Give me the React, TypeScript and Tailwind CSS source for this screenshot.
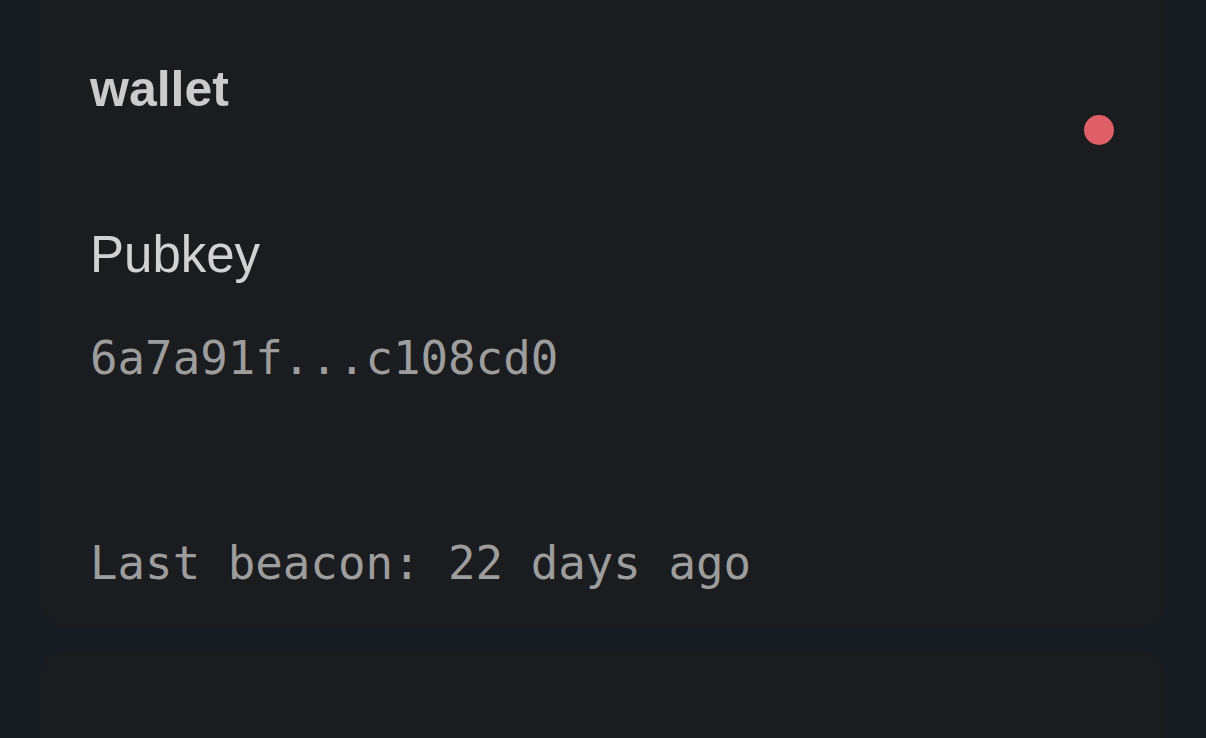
type Device = {
  name: string;
  pubkey: string;
  lastBeacon: string;
  online: boolean;
};

const devices: Device[] = [
  { name: "wallet", pubkey: "6a7a91f...c108cd0", lastBeacon: "22 days ago", online: false },
];

function DeviceCard({ device }: { device: Device }) {
  return (
    <div className="rounded-[24px] bg-[#1b1c1f] px-[50px] pt-[104px] pb-[40px]">
      <div className="flex items-start justify-between">
        <h2 className="text-[50px] leading-none font-bold text-[#cbcbcb] font-['Liberation_Sans',Arial,sans-serif]">
          {device.name}
        </h2>
        <span
          className={`mt-[51px] h-[30px] w-[30px] rounded-full ${
            device.online ? "bg-[#4caf50]" : "bg-[#df5f66]"
          }`}
        />
      </div>
      <div className="mt-[84px] text-[51px] leading-none text-[#d2d2d2] font-['Liberation_Sans',Arial,sans-serif]">
        Pubkey
      </div>
      <div className="mt-[56px] text-[45.75px] leading-none text-[#9d9d9d] font-['DejaVu_Sans_Mono',monospace]">
        {device.pubkey}
      </div>
      <div className="mt-[159px] text-[45.75px] leading-none text-[#9d9d9d] font-['DejaVu_Sans_Mono',monospace]">
        Last beacon: {device.lastBeacon}
      </div>
    </div>
  );
}

export default function App() {
  return (
    <div className="h-[738px] overflow-hidden bg-[#171c23] pl-[40px] pr-[42px]">
      <div className="-mt-[40px] flex flex-col gap-[25px]">
        {devices.map((d) => (
          <DeviceCard key={d.name} device={d} />
        ))}
        <div className="h-[300px] rounded-[24px] bg-[#1b1c1f]" />
      </div>
    </div>
  );
}
